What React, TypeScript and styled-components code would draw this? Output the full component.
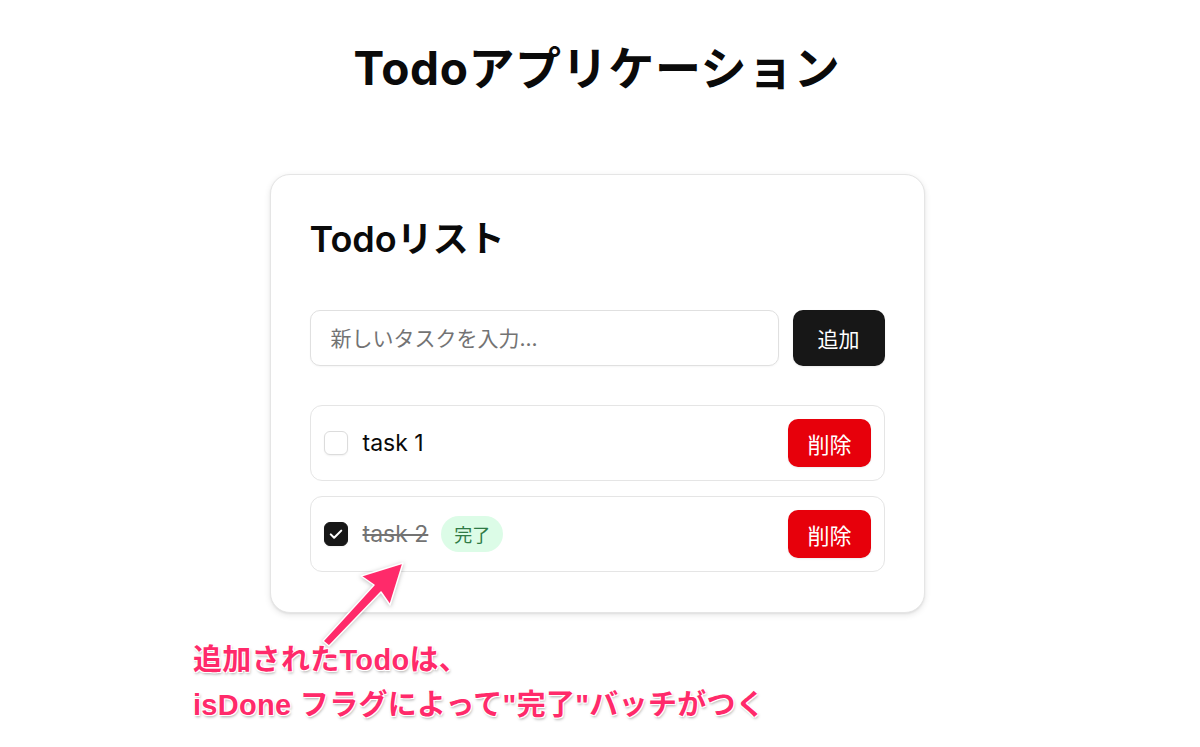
import React from 'react';
import { createGlobalStyle, styled } from 'styled-components';

const GlobalStyle = createGlobalStyle`
  html, body {
    margin: 0;
    padding: 0;
    background: #ffffff;
  }
  body {
    font-family: Inter, "Noto Sans CJK JP", sans-serif;
    color: #0a0a0a;
  }
  * {
    box-sizing: border-box;
  }
`;

const Page = styled.div`
  position: relative;
  width: 1200px;
  height: 747px;
  padding: 36px 6px 0 0;
  display: flex;
  flex-direction: column;
  align-items: center;
`;

const Title = styled.h1`
  margin: 0;
  font-size: 46px;
  line-height: 64px;
  font-weight: 700;
  letter-spacing: 0.6px;
`;

const Card = styled.section`
  margin-top: 74px;
  width: 655px;
  padding: 38px 39px 40px 39px;
  border: 1px solid #e5e5e5;
  border-radius: 20px;
  background: #ffffff;
  box-shadow: 0 2px 6px rgba(0, 0, 0, 0.1), 0 1px 2px rgba(0, 0, 0, 0.06);
`;

const CardTitle = styled.h2`
  margin: 0;
  font-size: 36px;
  line-height: 52px;
  font-weight: 600;
`;

const Form = styled.form`
  margin-top: 45px;
  display: flex;
  gap: 14px;
`;

const TextInput = styled.input`
  flex: 1;
  height: 56px;
  padding: 0 20px;
  border: 1px solid #e0e0e0;
  border-radius: 10px;
  font-family: inherit;
  font-size: 21px;
  color: #0a0a0a;
  box-shadow: 0 1px 2px rgba(0, 0, 0, 0.04);
  outline: none;

  &::placeholder {
    color: #737373;
  }
`;

const Button = styled.button<{ $variant: 'primary' | 'danger' }>`
  border: none;
  font-family: inherit;
  color: #ffffff;
  cursor: pointer;
  background: ${({ $variant }) => ($variant === 'primary' ? '#171717' : '#e7000b')};
  border-radius: 10px;
  font-size: ${({ $variant }) => ($variant === 'primary' ? '21px' : '22px')};
  height: ${({ $variant }) => ($variant === 'primary' ? '56px' : '48px')};
  padding: ${({ $variant }) => ($variant === 'primary' ? '0 25px' : '0 19px')};
  box-shadow: 0 1px 2px rgba(0, 0, 0, 0.08);
`;

const List = styled.ul`
  list-style: none;
  margin: 39px 0 0;
  padding: 0;
  display: flex;
  flex-direction: column;
  gap: 15px;
`;

const Item = styled.li`
  display: flex;
  align-items: center;
  padding: 13px 13px 13px 13px;
  border: 1px solid #e5e5e5;
  border-radius: 12px;
`;

const CheckBox = styled.span<{ $checked: boolean }>`
  width: 24px;
  height: 24px;
  flex-shrink: 0;
  border-radius: 6px;
  display: flex;
  align-items: center;
  justify-content: center;
  border: 1px solid ${({ $checked }) => ($checked ? '#171717' : '#dcdcdc')};
  background: ${({ $checked }) => ($checked ? '#171717' : '#ffffff')};
  box-shadow: 0 1px 2px rgba(0, 0, 0, 0.06);
`;

const TaskText = styled.span<{ $done: boolean }>`
  margin-left: 15px;
  font-size: 23px;
  line-height: 30px;
  color: ${({ $done }) => ($done ? '#737373' : '#0a0a0a')};
  text-decoration: ${({ $done }) => ($done ? 'line-through' : 'none')};
  text-decoration-thickness: 1.5px;
`;

const Badge = styled.span`
  margin-left: 13px;
  height: 36px;
  padding: 0 13px;
  display: inline-flex;
  align-items: center;
  border-radius: 999px;
  background: #dcfce7;
  color: #2f7a45;
  font-size: 18px;
`;

const Spacer = styled.span`
  flex: 1;
`;

const Arrow = styled.svg`
  position: absolute;
  left: 0;
  top: 0;
  pointer-events: none;
  filter: drop-shadow(0 1px 2px rgba(0, 0, 0, 0.25));
`;

const Callout = styled.div`
  position: absolute;
  left: 193px;
  top: 638px;
  color: #ff2a6a;
  font-family: "Liberation Sans", "Noto Sans CJK JP", sans-serif;
  font-weight: 700;
  font-size: 29px;
  line-height: 45px;
  letter-spacing: 0.3px;
  white-space: nowrap;
  text-shadow:
    0 0 2px #ffffff,
    1px 1px 0 #ffffff,
    -1px -1px 0 #ffffff,
    1px -1px 0 #ffffff,
    -1px 1px 0 #ffffff,
    1px 2px 3px rgba(0, 0, 0, 0.35);
`;

const CheckMark = () => (
  <svg width="18" height="18" viewBox="0 0 24 24" fill="none" stroke="#ffffff" strokeWidth="2.8" strokeLinecap="round" strokeLinejoin="round">
    <path d="M5 12.5l4.5 4.5L19 7.5" />
  </svg>
);

const todos = [
  { id: 1, text: 'task 1', isDone: false },
  { id: 2, text: 'task 2', isDone: true },
];

export default function App() {
  return (
    <>
      <GlobalStyle />
      <Page>
        <Title>Todoアプリケーション</Title>
        <Card>
          <CardTitle>Todoリスト</CardTitle>
          <Form onSubmit={(e) => e.preventDefault()}>
            <TextInput placeholder="新しいタスクを入力..." />
            <Button $variant="primary" type="submit">追加</Button>
          </Form>
          <List>
            {todos.map((todo) => (
              <Item key={todo.id}>
                <CheckBox $checked={todo.isDone}>{todo.isDone && <CheckMark />}</CheckBox>
                <TaskText $done={todo.isDone}>{todo.text}</TaskText>
                {todo.isDone && <Badge>完了</Badge>}
                <Spacer />
                <Button $variant="danger" type="button">削除</Button>
              </Item>
            ))}
          </List>
        </Card>
        <Arrow width="1200" height="747" viewBox="0 0 1200 747">
          <polygon
            points="403,563 390,605 381,592 329,646 323,641 374,585 361,576"
            fill="#ff2a6a"
            stroke="#ffffff"
            strokeWidth="1.5"
            strokeLinejoin="round"
          />
        </Arrow>
        <Callout>
          追加されたTodoは、
          <br />
          isDone フラグによって"完了"バッチがつく
        </Callout>
      </Page>
    </>
  );
}
